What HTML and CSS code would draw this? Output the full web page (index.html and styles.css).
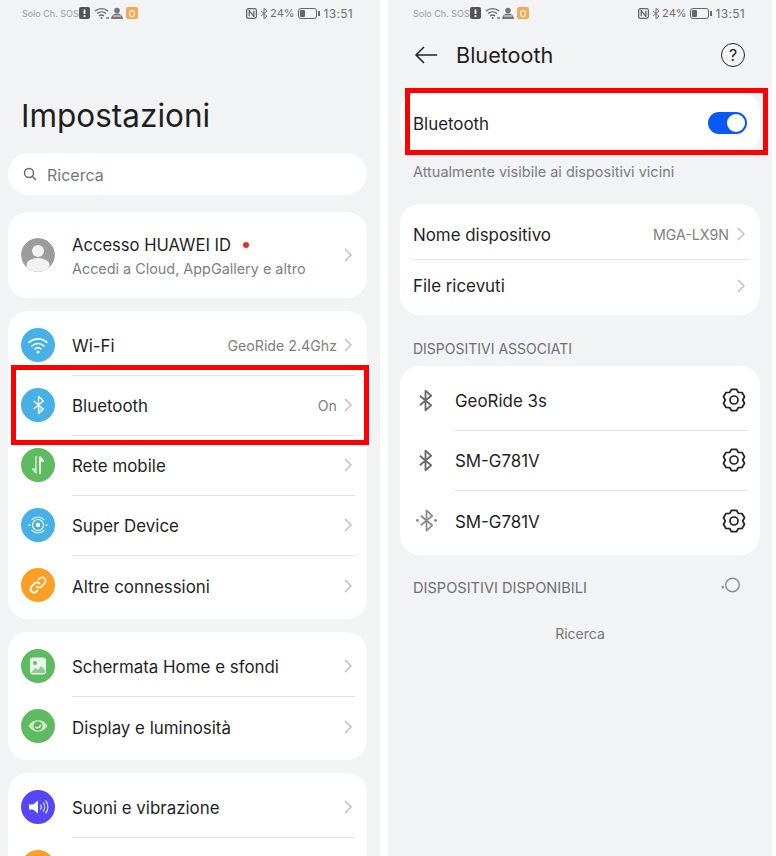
FILE: index.html
```html
<!DOCTYPE html>
<html lang="it">
<head>
    <meta charset="UTF-8">
    <meta name="viewport" content="width=device-width, initial-scale=1.0">
    <title>Impostazioni Bluetooth</title>
    <link rel="stylesheet" href="styles.css">
</head>
<body>
    <svg class="defs" width="0" height="0">
        <symbol id="chevron" viewBox="0 0 8 14"><path d="M1 1l6 6-6 6" fill="none" stroke="#bdbdbd" stroke-width="1.4"/></symbol>
        <symbol id="bt" viewBox="0 0 16 24"><path d="M2 7l12 10-6 5.500V1.500L14 7 2 17" fill="none" stroke="currentColor" stroke-width="2" stroke-linejoin="round"/></symbol>
        <symbol id="gear" viewBox="0 0 24 24"><path d="M14.500 1.300L16.350 4.470 20.040 4.500 22.500 8.790 20.700 12 22.500 15.210 20.040 19.500 16.350 19.530 14.500 22.700H9.500L7.650 19.530 3.960 19.500 1.500 15.210 3.300 12 1.500 8.790 3.960 4.500 7.650 4.470 9.500 1.300z" fill="none" stroke="#222" stroke-width="1.700" stroke-linejoin="round"/><circle cx="12" cy="12" r="4" fill="none" stroke="#222" stroke-width="1.700"/></symbol>
        <symbol id="status-wifi" viewBox="0 0 16 12"><path d="M1 4a10 10 0 0 1 13 0M3 6.500a7 7 0 0 1 9 0M5 9a4 4 0 0 1 5 0" fill="none" stroke="#666" stroke-width="1.300"/><circle cx="7.500" cy="11" r="1" fill="#666"/><path d="M12 11h3" stroke="#666" stroke-width="1.200"/></symbol>
    </svg>

    <div class="phone phone-left">
        <div class="status">
            <div class="status-side">
                <span class="carrier">Solo Ch. SOS</span>
                <svg class="st-alert" viewBox="0 0 11 12"><rect width="11" height="12" rx="2" fill="#555"/><path d="M5.500 2.500V7M5.500 8.300V10" stroke="#fff" stroke-width="1.800"/></svg>
                <svg class="st-wifi"><use href="#status-wifi"/></svg>
                <svg class="st-person" viewBox="0 0 12 12"><circle cx="6" cy="3.500" r="2.800" fill="#777"/><path d="M0 12c.5-4 3-5.500 6-5.500s5.500 1.500 6 5.500z" fill="#777"/><path d="M2 9h8" stroke="#eee"/></svg>
                <span class="st-app"><i></i></span>
            </div>
            <div class="status-side">
                <svg class="st-nfc" viewBox="0 0 12 12"><rect x=".7" y=".7" width="10.600" height="10.600" rx="2" fill="none" stroke="#666" stroke-width="1.400"/><path d="M3.500 9V3l5 6V3" fill="none" stroke="#666" stroke-width="1.400"/></svg>
                <svg class="st-bt"><use href="#bt"/></svg>
                <span class="st-pct">24%</span>
                <span class="battery"><i></i></span>
                <span class="st-time">13:51</span>
            </div>
        </div>
        <h1 class="title">Impostazioni</h1>
        <div class="search">
            <svg class="search-icon" viewBox="0 0 14 14"><circle cx="6" cy="6" r="4.500" fill="none" stroke="#666" stroke-width="1.400"/><path d="M9.500 9.500L13 13" stroke="#666" stroke-width="1.400"/></svg>
            <span>Ricerca</span>
        </div>

        <div class="card account">
            <svg class="icon" viewBox="0 0 34 34"><defs><clipPath id="avatar"><circle cx="17" cy="17" r="17"/></clipPath></defs><circle cx="17" cy="17" r="17" fill="#9c9c9c"/><g clip-path="url(#avatar)"><circle cx="17" cy="13" r="6" fill="#f1f1f1"/><ellipse cx="17" cy="27" rx="11.500" ry="7" fill="#f1f1f1"/></g></svg>
            <div class="account-text">
                <div class="account-name">Accesso HUAWEI ID<i class="red-dot"></i></div>
                <div class="account-sub">Accedi a Cloud, AppGallery e altro</div>
            </div>
            <svg class="chevron"><use href="#chevron"/></svg>
        </div>

        <div class="card">
            <div class="row">
                <span class="icon icon-blue"><svg viewBox="0 0 24 24"><path d="M3 9.500a13 13 0 0 1 18 0M6 13a8.500 8.500 0 0 1 12 0M9 16a4 4 0 0 1 6 0" fill="none" stroke="#fff" stroke-width="1.600" stroke-linecap="round"/><circle cx="12" cy="19" r="1.500" fill="#fff"/></svg></span>
                <div class="row-body"><span class="row-label">Wi-Fi</span><span class="row-value">GeoRide 2.4Ghz</span><svg class="chevron"><use href="#chevron"/></svg></div>
            </div>
            <div class="row">
                <span class="icon icon-blue"><svg class="icon-bt" viewBox="0 0 16 24"><path d="M2 7l12 10-6 5.500V1.500L14 7 2 17" fill="none" stroke="#fff" stroke-width="1.600" stroke-linejoin="round"/><path d="M8 12l6 5-6 5.500z" fill="#fff" opacity=".35"/></svg></span>
                <div class="row-body"><span class="row-label">Bluetooth</span><span class="row-value">On</span><svg class="chevron"><use href="#chevron"/></svg></div>
            </div>
            <div class="row">
                <span class="icon icon-green"><svg viewBox="0 0 24 24"><path d="M14 21V4l3.500 4H14" fill="#fff" stroke="#fff" stroke-width="1.500" stroke-linejoin="round"/><path d="M10 3v17l-3.500-4H10" fill="#cfe9cf" stroke="#cfe9cf" stroke-width="1.500" stroke-linejoin="round"/></svg></span>
                <div class="row-body"><span class="row-label">Rete mobile</span><svg class="chevron"><use href="#chevron"/></svg></div>
            </div>
            <div class="row">
                <span class="icon icon-blue"><svg viewBox="0 0 24 24"><circle cx="12" cy="12" r="2.200" fill="#fff"/><circle cx="12" cy="12" r="5.500" fill="none" stroke="#fff" stroke-width="1.200"/><path d="M5.500 7a9 9 0 0 1 13 0M18.500 17a9 9 0 0 1-13 0" fill="none" stroke="#fff" stroke-width="1.200" opacity=".75"/><circle cx="3.500" cy="12" r="1" fill="#fff"/><circle cx="20.500" cy="12" r="1" fill="#fff"/></svg></span>
                <div class="row-body"><span class="row-label">Super Device</span><svg class="chevron"><use href="#chevron"/></svg></div>
            </div>
            <div class="row">
                <span class="icon icon-orange"><svg viewBox="0 0 24 24"><path d="M10.500 13.500a3.500 3.500 0 0 0 5 0l3-3a3.500 3.500 0 0 0-5-5l-1 1" fill="none" stroke="#fff" stroke-width="1.800" stroke-linecap="round" opacity=".8"/><path d="M13.500 10.500a3.500 3.500 0 0 0-5 0l-3 3a3.500 3.500 0 0 0 5 5l1-1" fill="none" stroke="#fff" stroke-width="1.800" stroke-linecap="round"/></svg></span>
                <div class="row-body"><span class="row-label">Altre connessioni</span><svg class="chevron"><use href="#chevron"/></svg></div>
            </div>
        </div>

        <div class="card">
            <div class="row">
                <span class="icon icon-green"><svg viewBox="0 0 24 24"><rect x="4" y="3.500" width="16" height="17" rx="3" fill="#e9f5e9"/><circle cx="9" cy="9" r="2" fill="#6cbc6c"/><path d="M5 19l4-5 3 2 3-4 4 4v3z" fill="#8ecb8e"/></svg></span>
                <div class="row-body"><span class="row-label">Schermata Home e sfondi</span><svg class="chevron"><use href="#chevron"/></svg></div>
            </div>
            <div class="row">
                <span class="icon icon-green"><svg viewBox="0 0 24 24"><path d="M2.500 12C5 8 8 6.300 12 6.300S19 8 21.500 12C19 16 16 17.700 12 17.700S5 16 2.500 12z" fill="#cfe9cf"/><circle cx="12" cy="12" r="4.500" fill="#5cb85c"/><path d="M9.500 13a3 3 0 0 0 5-2.500" stroke="#fff" stroke-width="1.200" fill="none"/></svg></span>
                <div class="row-body"><span class="row-label">Display e luminosità</span><svg class="chevron"><use href="#chevron"/></svg></div>
            </div>
        </div>

        <div class="card">
            <div class="row">
                <span class="icon icon-purple"><svg viewBox="0 0 24 24"><path d="M3 9.500h4l5-4v13l-5-4H3z" fill="#fff"/><path d="M14.500 9.500a4 4 0 0 1 0 5M17 7.500a7 7 0 0 1 0 9M19.500 5.500a10 10 0 0 1 0 13" fill="none" stroke="#fff" stroke-width="1.200" opacity=".8"/></svg></span>
                <div class="row-body"><span class="row-label">Suoni e vibrazione</span><svg class="chevron"><use href="#chevron"/></svg></div>
            </div>
            <div class="row">
                <span class="icon icon-orange"></span>
                <div class="row-body"></div>
            </div>
        </div>

        <div class="red-box red-box-left"></div>
    </div>

    <div class="phone phone-right">
        <div class="status">
            <div class="status-side">
                <span class="carrier">Solo Ch. SOS</span>
                <svg class="st-alert" viewBox="0 0 11 12"><rect width="11" height="12" rx="2" fill="#555"/><path d="M5.500 2.500V7M5.500 8.300V10" stroke="#fff" stroke-width="1.800"/></svg>
                <svg class="st-wifi"><use href="#status-wifi"/></svg>
                <svg class="st-person" viewBox="0 0 12 12"><circle cx="6" cy="3.500" r="2.800" fill="#777"/><path d="M0 12c.5-4 3-5.500 6-5.500s5.500 1.500 6 5.500z" fill="#777"/><path d="M2 9h8" stroke="#eee"/></svg>
                <span class="st-app"><i></i></span>
            </div>
            <div class="status-side">
                <svg class="st-nfc" viewBox="0 0 12 12"><rect x=".7" y=".7" width="10.600" height="10.600" rx="2" fill="none" stroke="#666" stroke-width="1.400"/><path d="M3.500 9V3l5 6V3" fill="none" stroke="#666" stroke-width="1.400"/></svg>
                <svg class="st-bt"><use href="#bt"/></svg>
                <span class="st-pct">24%</span>
                <span class="battery"><i></i></span>
                <span class="st-time">13:51</span>
            </div>
        </div>
        <div class="topbar">
            <svg class="back" viewBox="0 0 24 18"><path d="M23 9H2M10 1L2 9l8 8" fill="none" stroke="#222" stroke-width="1.500"/></svg>
            <span class="topbar-title">Bluetooth</span>
            <span class="help">?</span>
        </div>

        <div class="card card-right toggle-card">
            <span class="row-label">Bluetooth</span>
            <span class="toggle"><i></i></span>
        </div>
        <div class="caption">Attualmente visibile ai dispositivi vicini</div>

        <div class="card card-right">
            <div class="info-row"><span class="row-label">Nome dispositivo</span><span class="row-value">MGA-LX9N</span><svg class="chevron"><use href="#chevron"/></svg></div>
            <div class="info-row"><span class="row-label">File ricevuti</span><svg class="chevron"><use href="#chevron"/></svg></div>
        </div>

        <div class="section">DISPOSITIVI ASSOCIATI</div>
        <div class="card card-right devices">
            <div class="device">
                <svg class="device-bt"><use href="#bt"/></svg>
                <div class="device-body"><span class="row-label">GeoRide 3s</span><svg class="gear"><use href="#gear"/></svg></div>
            </div>
            <div class="device">
                <svg class="device-bt"><use href="#bt"/></svg>
                <div class="device-body"><span class="row-label">SM-G781V</span><svg class="gear"><use href="#gear"/></svg></div>
            </div>
            <div class="device">
                <svg class="device-bt device-bt-faded" viewBox="0 0 22 24"><path d="M5 7l12 10-6 5.500V1.500L17 7 5 17" fill="none" stroke="currentColor" stroke-width="1.800" stroke-linejoin="round"/><circle cx="1.500" cy="12" r="1.500" fill="currentColor"/><circle cx="20.500" cy="12" r="1.500" fill="currentColor"/></svg>
                <div class="device-body"><span class="row-label">SM-G781V</span><svg class="gear"><use href="#gear"/></svg></div>
            </div>
        </div>

        <div class="section section-scan">
            <span>DISPOSITIVI DISPONIBILI</span>
            <svg class="spinner" viewBox="0 0 20 18"><circle cx="11.500" cy="9" r="6.800" fill="none" stroke="#8a8a8a" stroke-width="1.400"/><circle cx="1.800" cy="11" r="1.500" fill="#999"/></svg>
        </div>
        <div class="searching">Ricerca</div>

        <div class="red-box red-box-right"></div>
    </div>
</body>
</html>
```

FILE: styles.css
```css
* {
    box-sizing: border-box;
}
body {
    margin: 0;
    width: 776px;
    height: 856px;
    overflow: hidden;
    background-color: white;
    display: flex;
    gap: 8px;
    font-family: Inter, "Noto Sans", Arial, sans-serif;
    color: #1f1f1f;
}
.defs {
    position: absolute;
}
.phone {
    position: relative;
    height: 856px;
    overflow: hidden;
    background-color: #f1f3f5;
}
.phone-left {
    width: 380px;
}
.phone-right {
    width: 384px;
}

/* status bar */
.status {
    height: 26px;
    display: flex;
    justify-content: space-between;
    align-items: center;
    padding: 0 27px 0 22px;
    color: #6f6f6f;
}
.phone-right .status {
    padding: 0 27px 0 25px;
}
.status-side {
    display: flex;
    align-items: center;
}
.carrier {
    font-size: 9px;
    color: #9a9a9a;
    width: 57px;
    white-space: nowrap;
}
.st-alert {
    width: 11px;
    height: 12px;
}
.st-wifi {
    width: 16px;
    height: 12px;
    margin-left: 4px;
}
.st-person {
    width: 12px;
    height: 12px;
    margin-left: 1px;
}
.st-app {
    width: 12px;
    height: 12px;
    margin-left: 3px;
    border-radius: 2px;
    background-color: #f7a755;
    display: flex;
    align-items: center;
    justify-content: center;
}
.st-app i {
    width: 6px;
    height: 7px;
    border-radius: 50%;
    border: 1px solid #fff;
}
.st-nfc {
    width: 11px;
    height: 11px;
}
.st-bt {
    width: 8px;
    height: 13px;
    margin-left: 3px;
}
.st-pct {
    font-size: 11px;
    margin-left: 2px;
}
.battery {
    position: relative;
    width: 19px;
    height: 11px;
    margin-left: 3px;
    margin-right: 2px;
    padding: 1px;
    border: 1px solid #666;
    border-radius: 3px;
}
.battery i {
    display: block;
    width: 5px;
    height: 100%;
    background-color: #666;
    border-radius: 1px;
}
.battery::after {
    content: "";
    position: absolute;
    right: -4px;
    top: 2px;
    width: 2px;
    height: 5px;
    background-color: #666;
}
.st-time {
    font-size: 12px;
    margin-left: 5px;
    letter-spacing: .3px;
}

/* left screen */
.title {
    margin: 70px 0 0 21px;
    font-size: 31.500px;
    font-weight: 400;
    line-height: 40px;
}
.search {
    height: 42px;
    width: 359px;
    margin: 17px 0 0 8px;
    padding-left: 15px;
    display: flex;
    align-items: center;
    gap: 10px;
    border-radius: 21px;
    background-color: white;
    font-size: 16px;
    color: #777;
}
.search span {
    padding-top: 2px;
}
.search-icon {
    width: 14px;
    height: 14px;
}
.card {
    width: 359px;
    margin: 13px 0 0 8px;
    padding: 4px 0;
    border-radius: 20px;
    background-color: white;
}
.account {
    height: 86px;
    margin-top: 17px;
    padding: 0 15px 0 13px;
    display: flex;
    align-items: center;
    gap: 17px;
}
.account-text {
    flex: 1;
    padding-top: 4px;
}
.account-name {
    font-size: 16.600px;
    line-height: 24px;
    display: flex;
    align-items: center;
}
.account-sub {
    font-size: 14.400px;
    line-height: 24px;
    color: #808080;
}
.red-dot {
    width: 6px;
    height: 6px;
    margin-left: 12px;
    border-radius: 50%;
    background-color: #ee2a24;
}
.row {
    height: 60px;
    padding-left: 13px;
    display: flex;
    align-items: center;
    gap: 17px;
}
.icon {
    width: 34px;
    height: 34px;
    flex: none;
    border-radius: 50%;
    display: flex;
    align-items: center;
    justify-content: center;
}
.icon svg {
    width: 24px;
    height: 24px;
}
.icon .icon-bt {
    width: 13px;
    height: 20px;
}
.icon-blue {
    background-color: #47b0e6;
}
.icon-green {
    background-color: #5fbb62;
}
.icon-orange {
    background-color: #fba024;
}
.icon-purple {
    background-color: #5746f5;
}
.row-body {
    flex: 1;
    height: 61px;
    align-self: flex-start;
    margin-right: 12px;
    padding-right: 3px;
    display: flex;
    align-items: center;
    border-bottom: 1px solid #e4e4e4;
}
.row:last-child .row-body {
    border-bottom: none;
}
.row-label {
    flex: 1;
    font-size: 16.900px;
    padding-top: 2px;
    white-space: nowrap;
}
.row-value {
    font-size: 14.200px;
    color: #808080;
    margin-right: 7px;
}
.chevron {
    width: 8px;
    height: 14px;
    flex: none;
}

/* right screen */
.topbar {
    height: 44px;
    margin-top: 7px;
    padding: 0 27px 0 26px;
    display: flex;
    align-items: center;
}
.back {
    width: 24px;
    height: 18px;
}
.topbar-title {
    flex: 1;
    margin-left: 18px;
    font-size: 21.600px;
}
.help {
    width: 24px;
    height: 24px;
    border: 1.500px solid #222;
    border-radius: 50%;
    display: flex;
    align-items: center;
    justify-content: center;
    font-size: 16px;
}
.card-right {
    width: 360px;
    margin: 0 0 0 12px;
    padding: 5px 12px 4px 13px;
}
.toggle-card {
    height: 61px;
    margin-top: 15px;
    padding: 0 13px 0 13px;
    display: flex;
    align-items: center;
}
.toggle {
    width: 39px;
    height: 22px;
    padding: 2px;
    border-radius: 11px;
    background-color: #0a59f7;
    display: flex;
    justify-content: flex-end;
}
.toggle i {
    width: 18px;
    height: 18px;
    border-radius: 50%;
    background-color: white;
}
.caption {
    height: 51px;
    padding: 10px 0 0 25px;
    font-size: 14.500px;
    line-height: 18px;
    color: #7c7c7c;
}
.info-row {
    height: 51px;
    display: flex;
    align-items: center;
    border-bottom: 1px solid #e4e4e4;
}
.info-row:last-child {
    border-bottom: none;
}
.info-row .row-label {
    padding-top: 1px;
}
.info-row .row-value {
    margin-right: 8px;
}
.info-row .chevron {
    margin-right: 3px;
}
.section {
    height: 51px;
    padding: 25px 0 0 25px;
    font-size: 14px;
    line-height: 18px;
    color: #6f6f6f;
}
.section-scan {
    height: 50px;
    padding: 24px 31px 0 25px;
    font-size: 14.600px;
    display: flex;
    justify-content: space-between;
}
.spinner {
    width: 20px;
    height: 18px;
    margin-top: -3px;
}
.devices {
    padding: 4px 12px 5px 13px;
}
.device {
    height: 60px;
    display: flex;
    align-items: center;
}
.device-bt {
    width: 15px;
    height: 23px;
    margin-left: 5px;
    flex: none;
    color: #6b6b6b;
}
.device-bt-faded {
    width: 21px;
    margin-left: 3px;
    color: #8c8c8c;
}
.device-body {
    flex: 1;
    height: 61px;
    align-self: flex-start;
    margin-left: 22px;
    display: flex;
    align-items: center;
    border-bottom: 1px solid #e4e4e4;
}
.device-bt-faded + .device-body {
    margin-left: 18px;
}
.device:last-child .device-body {
    border-bottom: none;
}
.gear {
    width: 24px;
    height: 24px;
    margin-right: 2px;
}
.searching {
    margin-top: 20px;
    text-align: center;
    font-size: 14px;
    line-height: 18px;
    color: #777;
}

/* annotation boxes drawn over the screenshots */
.red-box {
    position: absolute;
    border: 5px solid #ff0000;
}
.red-box-left {
    left: 11px;
    top: 365px;
    width: 358px;
    height: 80px;
}
.red-box-right {
    left: 17px;
    top: 88px;
    width: 363px;
    height: 67px;
}
```
